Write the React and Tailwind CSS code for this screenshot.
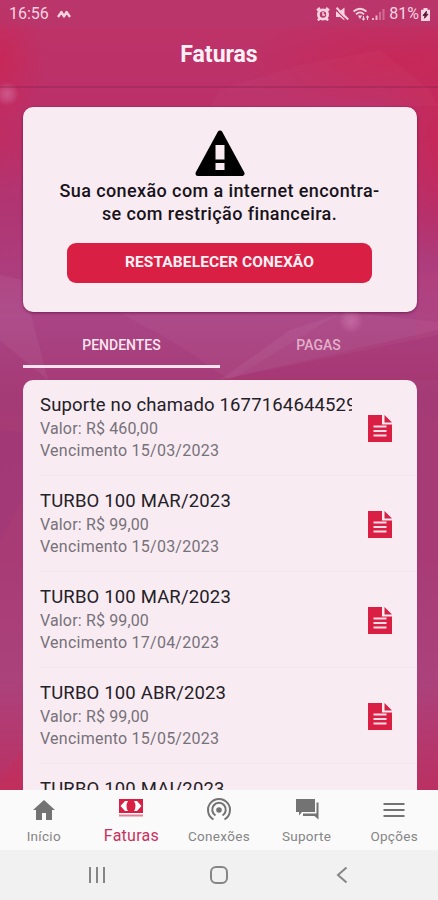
import clsx from 'clsx';

const invoices = [
  { title: 'Suporte no chamado 1677164644529', value: 'R$ 460,00', due: '15/03/2023' },
  { title: 'TURBO 100 MAR/2023', value: 'R$ 99,00', due: '15/03/2023' },
  { title: 'TURBO 100 MAR/2023', value: 'R$ 99,00', due: '17/04/2023' },
  { title: 'TURBO 100 ABR/2023', value: 'R$ 99,00', due: '15/05/2023' },
  { title: 'TURBO 100 MAI/2023' },
];

function Backdrop() {
  return (
    <svg className="col-start-1 row-start-1 h-[790px] w-full" viewBox="0 0 438 790" preserveAspectRatio="none">
      <defs>
        <linearGradient id="base" x1="0" y1="0" x2="0" y2="1">
          <stop offset="0" stopColor="#be3467" />
          <stop offset="0.13" stopColor="#bb3069" />
          <stop offset="0.27" stopColor="#b03573" />
          <stop offset="0.4" stopColor="#aa4485" />
          <stop offset="0.5" stopColor="#a53b76" />
          <stop offset="0.7" stopColor="#a83b76" />
          <stop offset="0.86" stopColor="#ab427c" />
          <stop offset="1" stopColor="#bb3062" />
        </linearGradient>
        <radialGradient id="red">
          <stop offset="0" stopColor="#c92655" stopOpacity="0.85" />
          <stop offset="1" stopColor="#c92655" stopOpacity="0" />
        </radialGradient>
        <radialGradient id="spark">
          <stop offset="0" stopColor="#d884b4" stopOpacity="0.5" />
          <stop offset="0.5" stopColor="#d884b4" stopOpacity="0.3" />
          <stop offset="1" stopColor="#d884b4" stopOpacity="0" />
        </radialGradient>
      </defs>
      <rect width="438" height="790" fill="url(#base)" />
      <ellipse cx="0" cy="62" rx="45" ry="60" fill="url(#red)" />
      <ellipse cx="0" cy="135" rx="40" ry="60" fill="url(#red)" opacity="0.5" />
      <ellipse cx="390" cy="62" rx="150" ry="50" fill="url(#red)" />
      <ellipse cx="438" cy="140" rx="60" ry="120" fill="url(#red)" />
      <polygon points="219,90 300,65 380,50 430,90 438,106 210,106" fill="#fff" opacity="0.025" />
      <polygon points="0,275 22,280 48,380 0,340" fill="#fff" opacity="0.05" />
      <polygon points="115,310 345,310 230,380 180,346" fill="#fff" opacity="0.035" />
      <polygon points="220,380 290,330 345,312 438,322 438,335" fill="#fff" opacity="0.05" />
      <polygon points="438,330 438,380 220,380" fill="#a92a68" opacity="0.25" />
      <polygon points="416,275 438,270 438,330 416,340" fill="#c3487f" opacity="0.2" />
      <polygon points="0,430 22,432 22,500 0,540" fill="#7d2a72" opacity="0.1" />
      <polygon points="0,780 22,750 22,790 0,790" fill="#cc2a52" opacity="0.3" />
      <circle cx="7" cy="94" r="12" fill="url(#spark)" />
      <circle cx="351" cy="321" r="12" fill="url(#spark)" />
      <rect width="438" height="27" fill="#a64a80" opacity="0.12" />
      <rect y="86" width="438" height="2" fill="#801f50" opacity="0.3" />
    </svg>
  );
}

function StatusBar() {
  return (
    <div className="flex h-7 items-center justify-between pr-[8px] pl-[9px] text-[#f7d3e0]">
      <div className="flex items-center gap-2">
        <span className="text-base leading-7">16:56</span>
        <svg className="h-2 w-[14px]" viewBox="0 0 14 8" fill="none" stroke="currentColor" strokeWidth="2.4" strokeLinejoin="round">
          <path d="M1 7 4.5 2 7 6.5 9.5 2 13 7" />
        </svg>
      </div>
      <div className="flex items-center">
        <svg className="h-[14px] w-[14px]" viewBox="0 0 14 14" fill="none" stroke="currentColor" strokeWidth="2.4">
          <circle cx="7" cy="7.5" r="4.6" strokeWidth="2.8" />
          <path d="M1 3.5 4 1M13 3.5 10 1M2 13.5l2-2.500M12 13.500l-2-2.500" />
          <path d="M7 5v3h2" strokeWidth="1.4" />
        </svg>
        <svg className="ml-[5px] h-[14px] w-[14px]" viewBox="0 0 14 14" fill="currentColor">
          <path d="M1 4.5h3.500L9.500 0.500v13L5 10H1z" />
          <path d="M0 1.800 11.500 13.300" stroke="#bd3467" strokeWidth="1.200" />
          <path d="M1.500.8 13.200 12.500" stroke="currentColor" strokeWidth="2" />
        </svg>
        <svg className="ml-[3px] h-[14px] w-[18px]" viewBox="0 0 17 14" fill="none" stroke="currentColor" strokeWidth="1.800">
          <path d="M1 4.500Q7.500-1 14 4.500M3.500 7.300Q7.500 3.500 11.500 7.300" />
          <path d="M5.300 8.500h4.400l-2.200 3.500z" fill="currentColor" stroke="none" />
          <path d="M11 9v4M9.700 11.500l1.300 1.500 1.300-1.500M15 13V9M13.700 10.500 15 9l1.300 1.500" strokeWidth="1.100" />
        </svg>
        <svg className="ml-[2px] h-[14px] w-[13px]" viewBox="0 0 13 14" fill="currentColor">
          <path d="M0 11h2v2H0zM3.500 8.500h2V13h-2z" opacity="0.8" />
          <path d="M7 5h2v8H7zM10.500 2h2v11h-2z" opacity="0.35" />
        </svg>
        <span className="ml-[4px] text-base leading-7">81%</span>
        <svg className="ml-[2px] h-[13px] w-[9px]" viewBox="0 0 9 14" preserveAspectRatio="none" fill="currentColor">
          <path d="M2.500 0h4v2H9v12H0V2h2.500z" />
          <path d="M5.500 3.500 2 8h2l-.5 3L7 6.800H5z" fill="#5a1a3c" stroke="#5a1a3c" />
        </svg>
      </div>
    </div>
  );
}

function AlertCard() {
  return (
    <section className="mr-[21px] ml-[23px] flex h-[205px] flex-col items-center rounded-[10px] bg-[#f8ecf2] pt-[23px] pr-px shadow-[0_1px_3px_rgba(80,10,50,0.6)]">
      <svg className="h-[47px] w-[50px]" viewBox="0 0 50 47">
        <path d="M25 3 47 43.500H3z" stroke="#000" strokeWidth="5" strokeLinejoin="round" />
        <path d="M20.500 15h9v14.500h-9zM20.500 33h9v7h-9z" fill="#f8ecf2" />
      </svg>
      <p className="mt-[3px] text-center text-[18px] leading-[22.500px] font-medium tracking-[0.400px] whitespace-nowrap text-[#18131a]">
        Sua conexão com a internet encontra-
        <br />
        se com restrição financeira.
      </p>
      <button className="mt-[18px] h-10 w-[305px] rounded-[9px] bg-[#d91f43] pb-px text-[15.500px] font-bold tracking-[0.100px] text-[#fff0f5]">
        RESTABELECER CONEXÃO
      </button>
    </section>
  );
}

function Tabs() {
  return (
    <div className="mr-[21px] ml-[23px] mt-[11px] flex h-[45px] text-sm font-medium">
      <button className="w-[197px] border-b-[3px] border-[#fae3ee] pt-[2px] text-[#fbe5ef]">PENDENTES</button>
      <button className="flex-1 border-b-[3px] border-transparent pt-[2px] text-[#e2b0cb]">PAGAS</button>
    </div>
  );
}

function InvoiceIcon() {
  return (
    <svg className="h-[27px] w-6 shrink-0" viewBox="0 0 24 27">
      <path d="M0 0h14v9.500h10V27H0z" fill="#d91f43" />
      <path d="M16.500 0 24 7.500h-7.500z" fill="#d91f43" />
      <path d="M5.500 11.500h13M5.500 16h13M5.500 20.500h13" stroke="#f8dce5" strokeWidth="2" />
    </svg>
  );
}

function InvoiceRow({ invoice }) {
  return (
    <li className="ml-[17px] flex h-24 border-b border-[#f2e5ec]">
      <div className="w-[312px] overflow-hidden pt-[13px] whitespace-nowrap text-[#77717a]">
        <h3 className="text-[18.500px] leading-6 tracking-[0.160px] text-[#242027]">{invoice.title}</h3>
        {invoice.value && (
          <>
            <p className="pt-px text-base leading-[22px] tracking-[0.150px]">Valor: {invoice.value}</p>
            <p className="text-base leading-[22px] tracking-[0.240px]">Vencimento {invoice.due}</p>
          </>
        )}
      </div>
      {invoice.value && (
        <div className="ml-4 pt-[35px]">
          <InvoiceIcon />
        </div>
      )}
    </li>
  );
}

const navItems = [
  {
    label: 'Início',
    icon: <path d="M12 1 1 11h3v10h6v-7h4v7h6V11h3z" fill="currentColor" />,
  },
  {
    label: 'Faturas',
    active: true,
    icon: (
      <>
        <path d="M0 0h24v14H0z" fill="#d91f43" />
        <path d="M6 2 1.500 7 6 12h3Q6 7 9 2zM18 2l4.500 5-4.500 5h-3q3-5 0-10z" fill="#fff" />
        <path d="M0 16.500h24" stroke="#df8395" strokeWidth="2" />
      </>
    ),
  },
  {
    label: 'Conexões',
    icon: (
      <g fill="none" stroke="currentColor" strokeWidth="2">
        <path d="M6.500 20.500a11 11 0 1 1 11 0M8.500 16.500a6.800 6.800 0 1 1 7 0" />
        <circle cx="12" cy="11" r="1.800" fill="currentColor" />
      </g>
    ),
  },
  {
    label: 'Suporte',
    icon: <path d="M1 0h19v13H7l-3 3.500V13H1zM21.500 3.500h2V20.500l-4-3.500H8v-2.500h13.500z" fill="currentColor" />,
  },
  {
    label: 'Opções',
    icon: <path d="M1.500 5h21M1.500 11h21M1.500 17h21" stroke="currentColor" strokeWidth="2" />,
  },
];

function BottomNav() {
  return (
    <nav className="grid h-[60px] grid-cols-5 bg-[#fafafa]">
      {navItems.map((item) => (
        <a key={item.label} className="flex flex-col items-center pt-[9px] text-[#737373]">
          <svg className="h-[22px] w-6 shrink-0 overflow-visible" viewBox="0 0 24 22">
            {item.icon}
          </svg>
          <span
            className={clsx(
              'mt-[6px] leading-[18px]',
              item.active ? 'text-base tracking-[0.250px] text-[#c9305c]' : 'text-[13.500px] tracking-[0.300px] text-[#858585]'
            )}
          >
            {item.label}
          </span>
        </a>
      ))}
    </nav>
  );
}

function SystemBar() {
  return (
    <div className="flex h-[50px] bg-[#f1f1f1] pt-4 pl-[88px] text-[#858585]">
      <svg className="h-[18px] w-[18px]" viewBox="0 0 18 18" fill="none" stroke="currentColor" strokeWidth="2">
        <path d="M2 1v16M9 1v16M16 1v16" />
      </svg>
      <svg className="ml-[104px] h-[18px] w-[18px]" viewBox="0 0 18 18" fill="none" stroke="currentColor" strokeWidth="2">
        <rect x="1" y="1" width="16" height="16" rx="5" />
      </svg>
      <svg className="ml-[108px] h-[18px] w-[12px]" viewBox="0 0 12 18" fill="none" stroke="currentColor" strokeWidth="2">
        <path d="M10.500 1.500 2 9l8.500 7.500" />
      </svg>
    </div>
  );
}

export default function App() {
  return (
    <div className="flex h-[900px] w-[438px] flex-col overflow-hidden font-[Roboto,sans-serif]">
      <div className="grid h-[790px] grid-cols-1 grid-rows-[790px] overflow-hidden">
        <Backdrop />
        <div className="z-10 col-start-1 row-start-1 flex flex-col overflow-hidden">
          <StatusBar />
          <h1 className="h-[79px] pt-[11px] text-center text-[23px] leading-8 font-bold text-[#fff0f6]">Faturas</h1>
          <AlertCard />
          <Tabs />
          <ul className="mr-[21px] ml-[23px] mt-[12px] h-[410px] overflow-hidden rounded-t-[10px] bg-[#f8ecf2]">
            {invoices.map((invoice, i) => (
              <InvoiceRow key={i} invoice={invoice} />
            ))}
          </ul>
        </div>
      </div>
      <BottomNav />
      <SystemBar />
    </div>
  );
}
